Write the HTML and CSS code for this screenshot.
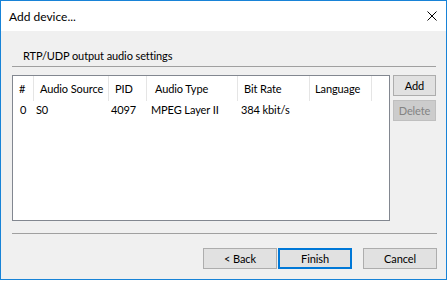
FILE: index.html
```html
<!DOCTYPE html>
<html lang="en">
  <head>
    <meta charset="UTF-8" />
    <title>Add device...</title>
    <link rel="stylesheet" href="styles.css">
  </head>
  <body>
    <div class="window">
      <div class="titlebar">
        <span class="title">Add device...</span>
        <svg class="close" width="10" height="10" viewBox="0 0 10 10">
          <path d="M0.5 0.5 L9.5 9.5 M9.5 0.5 L0.5 9.5" stroke="#000" stroke-width="1" fill="none" />
        </svg>
      </div>
      <div class="content">
        <div class="group-title">RTP/UDP output audio settings</div>
        <div class="rule top-rule"></div>
        <div class="main">
          <div class="listview">
            <div class="lv-header">
              <div class="col c1">#</div>
              <div class="col c2">Audio Source</div>
              <div class="col c3">PID</div>
              <div class="col c4">Audio Type</div>
              <div class="col c5">Bit Rate</div>
              <div class="col c6">Language</div>
            </div>
            <div class="lv-row">
              <div class="cell c1">0</div>
              <div class="cell c2">S0</div>
              <div class="cell c3">4097</div>
              <div class="cell c4">MPEG Layer II</div>
              <div class="cell c5">384 kbit/s</div>
              <div class="cell c6"></div>
            </div>
          </div>
          <div class="side-buttons">
            <button class="btn small">Add</button>
            <button class="btn small" disabled>Delete</button>
          </div>
        </div>
        <div class="rule bottom-rule"></div>
        <div class="footer">
          <button class="btn wide">&lt; Back</button>
          <button class="btn wide default">Finish</button>
          <button class="btn wide cancel">Cancel</button>
        </div>
      </div>
    </div>
  </body>
</html>
```

FILE: styles.css
```css
body {
  margin: 0;
  background-color: #ffffff;
  font-family: Lato, "Liberation Sans", sans-serif;
  font-size: 11px;
  letter-spacing: -0.1px;
  color: #000;
}
.window {
  width: 447px;
  height: 280px;
  box-sizing: border-box;
  border: 1px solid #1883d7;
  display: flex;
  flex-direction: column;
}
.titlebar {
  height: 30px;
  background-color: #fff;
  display: flex;
  align-items: center;
  justify-content: space-between;
  padding: 0 8px 0 8px;
  flex-shrink: 0;
}
.title {
  font-size: 12px;
  letter-spacing: 0;
}
.close {
  margin-top: -1px;
  margin-right: 1px;
}
.content {
  flex: 1;
  background-color: #f0f0f0;
}
.group-title {
  margin-top: 17px;
  padding-left: 22px;
  line-height: 16px;
  height: 16px;
}
.rule {
  height: 1px;
  background-color: #a0a0a0;
}
.top-rule {
  margin: 2px 10px 0 11px;
}
.bottom-rule {
  margin: 12px 9px 0 11px;
}
.main {
  display: flex;
  align-items: flex-start;
  margin-top: 8px;
  padding-left: 11px;
}
.listview {
  width: 378px;
  height: 146px;
  box-sizing: border-box;
  border: 1px solid #828790;
  background-color: #fff;
}
.lv-header,
.lv-row {
  display: flex;
}
.lv-header {
  height: 25px;
  align-items: center;
}
.lv-header .col {
  height: 25px;
  line-height: 25px;
  padding-left: 6px;
  box-sizing: border-box;
  border-right: 1px solid #e5e5e5;
  white-space: nowrap;
}
.lv-header .c4 {
  padding-left: 8px;
}
.lv-header .c6 {
  padding-left: 5px;
}
.lv-row {
  height: 17px;
  line-height: 17px;
}
.lv-row .cell {
  padding-left: 2px;
  box-sizing: border-box;
  white-space: nowrap;
}
.c1 { width: 21px; }
.c2 { width: 75px; }
.c3 { width: 38px; }
.c4 { width: 91px; }
.c5 { width: 72px; }
.c6 { width: 62px; }
.lv-row .c1 {
  padding-left: 7px;
}
.lv-row .c4 {
  padding-left: 4px;
}
.lv-row .c5 {
  padding-left: 3px;
}
.side-buttons {
  display: flex;
  flex-direction: column;
  gap: 4px;
  margin-left: 3px;
}
.btn {
  font-family: Lato, "Liberation Sans", sans-serif;
  font-size: 11px;
  letter-spacing: -0.1px;
  color: #000;
  background-color: #e1e1e1;
  border: 1px solid #adadad;
  height: 21px;
  padding: 0;
  margin: 0;
  box-sizing: border-box;
}
.btn.small {
  width: 43px;
}
.btn:disabled {
  background-color: #cccccc;
  border-color: #bfbfbf;
  color: #838383;
}
.footer {
  display: flex;
  justify-content: flex-end;
  margin-top: 14px;
  padding-right: 9px;
}
.btn.wide {
  width: 74px;
  margin-left: 1px;
}
.btn.default {
  border: 2px solid #0078d7;
}
.btn.cancel {
  margin-left: 11px;
}
```
